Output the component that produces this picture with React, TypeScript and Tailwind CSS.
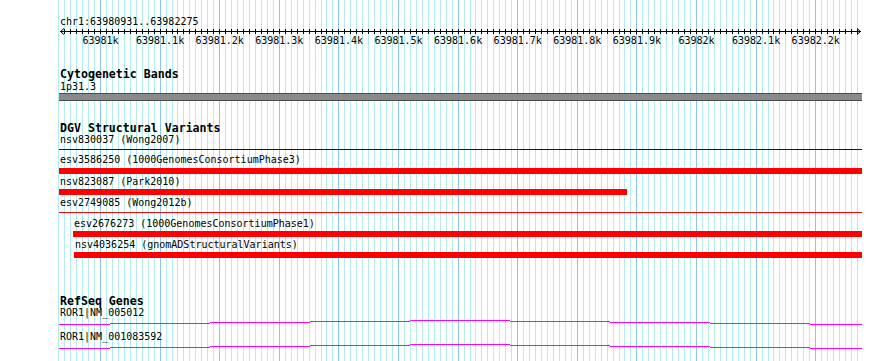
import React from 'react';

const X0 = 100; // x of 63981k
const STEP = 5.96; // px per 10bp

const gridLines = Array.from({ length: 135 }, (_, k) => {
  const i = k - 7;
  return { x: Math.round(X0 + i * STEP), major: i % 10 === 0 };
});

const rulerLabels = [
  '63981k', '63981.1k', '63981.2k', '63981.3k', '63981.4k', '63981.5k', '63981.6k',
  '63981.7k', '63981.8k', '63981.9k', '63982k', '63982.1k', '63982.2k',
];

// stepped transcript line, one pixel per 100px block
const geneSteps = [
  [59, 110, 4], [110, 210, 3], [210, 310, 2], [310, 410, 1], [410, 510, 0],
  [510, 610, 1], [610, 710, 2], [710, 810, 3], [810, 862, 4],
];

const Grid: React.FC = () => (
  <svg className="absolute inset-0" width={890} height={361} shapeRendering="crispEdges">
    {gridLines.map((g, idx) => (
      <line key={idx} x1={g.x + 0.5} x2={g.x + 0.5} y1={0} y2={361} stroke={g.major ? '#8ac6ea' : '#b2ecec'} strokeWidth={1} />
    ))}
  </svg>
);

const Ruler: React.FC = () => (
  <svg width={890} height={20} className="block -ml-[59px]" shapeRendering="crispEdges">
    <line x1={60} x2={861} y1={3.5} y2={3.5} stroke="#000" />
    {gridLines.filter((g) => g.x > 62 && g.x < 858).map((g, idx) => (
      <line key={idx} x1={g.x + 0.5} x2={g.x + 0.5} y1={1} y2={6} stroke="#000" />
    ))}
    <polyline points="64,0.5 60.5,3.5 64,6.5" fill="none" stroke="#000" shapeRendering="auto" />
    <polyline points="857,0.5 860.5,3.5 857,6.5" fill="none" stroke="#000" shapeRendering="auto" />
    {rulerLabels.map((l, i) => (
      <text key={l} x={X0 + i * STEP * 10 + 0.5} y={16} textAnchor="middle" fontSize={10} fontFamily="'DejaVu Sans Mono', monospace" fill="#000">
        {l}
      </text>
    ))}
  </svg>
);

const GeneLine: React.FC = () => (
  <svg width={890} height={6} className="block -ml-[59px]" shapeRendering="crispEdges">
    {geneSteps.map(([a, b, dy], i) => (
      <line key={i} x1={a} x2={b} y1={dy + 0.5} y2={dy + 0.5} stroke="#ff00ff" strokeWidth={1} />
    ))}
  </svg>
);

const Label: React.FC<{ children: React.ReactNode; className?: string }> = ({ children, className = '' }) => (
  <div className={`text-[10px] leading-[12px] h-[12px] whitespace-nowrap ${className}`}>{children}</div>
);

const Title: React.FC<{ children: React.ReactNode; className?: string }> = ({ children, className = '' }) => (
  <div className={`text-[11.6px] leading-[12px] h-[12px] font-bold whitespace-nowrap ${className}`}>{children}</div>
);

const Bar: React.FC<{ className?: string }> = ({ className = '' }) => (
  <div className={`h-[6px] bg-[#ff0000] ${className}`} />
);

export default function App() {
  return (
    <div className="relative w-[890px] h-[361px] overflow-hidden bg-white text-black font-['DejaVu_Sans_Mono',monospace]">
      <Grid />
      <div className="relative pl-[59px] w-[862px]">
        <Label className="mt-[16px] pl-px">chr1:63980931..63982275</Label>
        <Ruler />

        {/* Cytogenetic Bands */}
        <Title className="mt-[20px] pl-px">Cytogenetic Bands</Title>
        <Label className="mt-px pl-px">1p31.3</Label>
        <div className="h-[8px] border-y border-[#4a4a4a] bg-[#8a8a8a]" />

        {/* DGV Structural Variants */}
        <Title className="mt-[21px] pl-px">DGV Structural Variants</Title>
        <Label className="pl-px">nsv830037 (Wong2007)</Label>
        <div className="mt-[3px] h-px bg-[#0000c8]" />
        <Label className="mt-[4px] pl-px">esv3586250 (1000GenomesConsortiumPhase3)</Label>
        <Bar className="mt-[2px]" />
        <Label className="mt-[2px] pl-px">nsv823087 (Park2010)</Label>
        <Bar className="mt-px w-[568px]" />
        <Label className="mt-[2px] pl-px">esv2749085 (Wong2012b)</Label>
        <div className="mt-[3px] h-px bg-[#ff0000]" />
        <Label className="mt-[5px] pl-[15px]">esv2676273 (1000GenomesConsortiumPhase1)</Label>
        <Bar className="mt-px ml-[14px]" />
        <Label className="mt-[2px] pl-[16px]">nsv4036254 (gnomADStructuralVariants)</Label>
        <Bar className="mt-px ml-[15px]" />

        {/* RefSeq Genes */}
        <Title className="mt-[37px] pl-px">RefSeq Genes</Title>
        <Label className="pl-px">ROR1|NM_005012</Label>
        <div className="mt-px">
          <GeneLine />
        </div>
        <Label className="mt-[5px] pl-px">ROR1|NM_001083592</Label>
        <div className="mt-px">
          <GeneLine />
        </div>
      </div>
    </div>
  );
}
